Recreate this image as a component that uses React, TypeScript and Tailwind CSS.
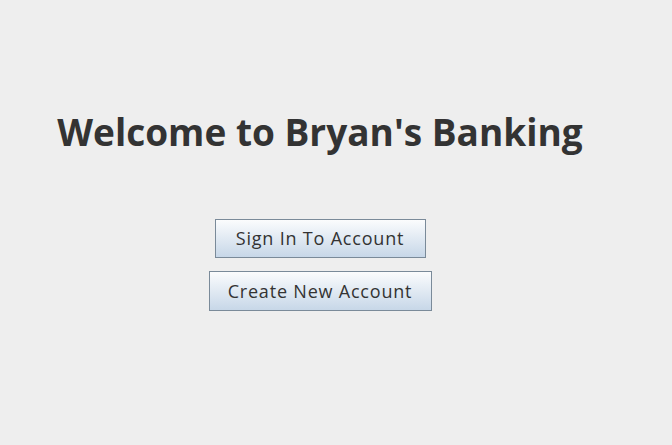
export default function App() {
  const font = { fontFamily: '"Comic Sans MS", "Open Sans", "DejaVu Sans", sans-serif' }

  return (
    <div className="w-[672px] h-[445px] bg-[#eeeeee] overflow-hidden" style={font}>
      <div className="w-[640px] flex flex-col items-center pt-[105px]">
        <h1 className="text-[37px] leading-[54px] font-bold text-[#333333]">
          Welcome to Bryan's Banking
        </h1>

        <div className="mt-[60px] flex flex-col items-center gap-[13px]">
          <button className="w-[211px] h-[39px] border border-[#7a8a99] bg-gradient-to-b from-[#fbfcfd] to-[#c7d7e8] text-[18px] tracking-[0.8px] text-[#333333]">
            Sign In To Account
          </button>
          <button className="w-[223px] h-[40px] border border-[#7a8a99] bg-gradient-to-b from-[#fbfcfd] to-[#c7d7e8] text-[18px] tracking-[0.8px] text-[#333333]">
            Create New Account
          </button>
        </div>
      </div>
    </div>
  )
}
